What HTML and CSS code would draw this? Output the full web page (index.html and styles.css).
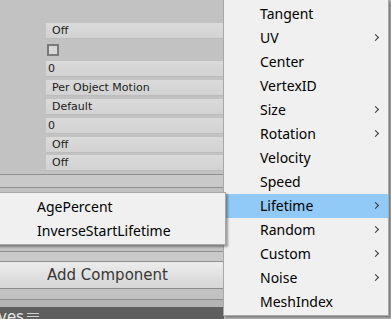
FILE: index.html
```html
<!DOCTYPE html>
<html lang="en">
<head>
    <meta charset="UTF-8">
    <title>Inspector</title>
    <link rel="stylesheet" href="styles.css">
</head>
<body>
    <div id="wrapper">
        <div class="inspector">
            <div class="field first">Off</div>
            <div class="check-row"><span class="checkbox"></span></div>
            <div class="field num">0</div>
            <div class="field">Per Object Motion</div>
            <div class="field">Default</div>
            <div class="field num">0</div>
            <div class="field">Off</div>
            <div class="field last">Off</div>
            <div class="line"></div>
            <div class="band"></div>
            <div class="line"></div>
            <div class="gap1"></div>
            <div class="line"></div>
            <div class="band2"></div>
            <div class="line"></div>
            <div class="btn-row"><div class="btn">Add Component</div></div>
            <div class="gap2"></div>
            <div class="line"></div>
            <div class="gap3"></div>
            <div class="dark-bar"><span class="dark-title">ves</span><span class="grip"></span></div>
        </div>

        <!-- context menu -->
        <div class="menu">
            <div class="item">Tangent</div>
            <div class="item sub">UV</div>
            <div class="item">Center</div>
            <div class="item">VertexID</div>
            <div class="item sub">Size</div>
            <div class="item sub">Rotation</div>
            <div class="item">Velocity</div>
            <div class="item">Speed</div>
            <div class="item sub active">Lifetime</div>
            <div class="item sub">Random</div>
            <div class="item sub">Custom</div>
            <div class="item sub">Noise</div>
            <div class="item">MeshIndex</div>
        </div>

        <div class="submenu">
            <div class="item">AgePercent</div>
            <div class="item">InverseStartLifetime</div>
        </div>
    </div>
</body>
</html>
```

FILE: styles.css
```css
body{
    margin: 0;
    background-color: #c2c2c2;
}
#wrapper{
    position: relative;
    width: 391px;
    height: 319px;
    overflow: hidden;
}
.inspector{
    width: 224px;
    display: flex;
    flex-direction: column;
    font-family: "DejaVu Sans", Verdana, sans-serif;
    font-size: 11px;
    color: #1c1c1c;
}
.field{
    height: 16px;
    line-height: 16px;
    margin-left: 46px;
    margin-top: 3px;
    padding-left: 6px;
    background: linear-gradient(#dadada, #d2d2d2);
    border-bottom: 1px solid #bcbcbc;
    box-sizing: border-box;
}
.field.num{
    padding-left: 2px;
}
.field.first{
    margin-top: 23px;
}
.field.last{
    margin-top: 2px;
    margin-bottom: 3px;
}
.check-row{
    height: 22px;
    margin-left: 46px;
    display: flex;
    align-items: center;
}
.checkbox{
    width: 8px;
    height: 8px;
    margin-left: 1px;
    border: 2px solid #7a7a7a;
    background-color: #d8d8d8;
}
.check-row + .field{
    margin-top: 0;
}
.line{
    height: 1px;
    background-color: #8f8f8f;
}
.band{
    height: 12px;
    background-color: #c9c9c9;
}
.gap1{
    height: 63px;
}
.band2{
    height: 9px;
    background-color: #c9c9c9;
}
.btn-row{
    height: 27px;
    display: flex;
}
.btn{
    width: 233px;
    margin-left: -10px;
    flex-shrink: 0;
    height: 26px;
    line-height: 26px;
    text-align: center;
    font-size: 15px;
    color: #383838;
    background: linear-gradient(#ececec, #d6d6d6);
    border: 1px solid #8a8a8a;
    border-top: none;
    border-radius: 3px;
}
.gap2{
    height: 10px;
}
.gap3{
    height: 7px;
    background-color: #b4b4b4;
}
.dark-bar{
    height: 20px;
    background-color: #5e5e5e;
    display: flex;
    align-items: flex-start;
}
.dark-title{
    color: #e6e6e6;
    font-size: 15px;
    line-height: 12px;
    margin-top: 4px;
    margin-left: -2px;
}
.grip{
    width: 12px;
    height: 2px;
    margin-left: 3px;
    margin-top: 6px;
    border-top: 1px solid #d0d0d0;
    border-bottom: 1px solid #d0d0d0;
}

/* menus */
.menu, .submenu{
    position: absolute;
    background-color: #f0f0f0;
    border: 1px solid #a8a8a8;
    font-family: "Noto Sans", "Open Sans", sans-serif;
    font-size: 14px;
    color: #000000;
    box-shadow: 2px 2px 2px rgba(0,0,0,0.35);
}
.menu{
    left: 223px;
    top: -1px;
    width: 163px;
    padding: 2px 0 1px 1px;
}
.submenu{
    left: -5px;
    top: 192px;
    width: 227px;
    padding: 2px 1px 1px 1px;
}
.item{
    position: relative;
    height: 24px;
    line-height: 24px;
    padding-left: 35px;
}
.submenu .item{
    padding-left: 40px;
}
.item.active{
    background-color: #91c9f7;
}
.item.sub::after{
    content: "";
    position: absolute;
    left: 148px;
    top: 9px;
    width: 4px;
    height: 4px;
    border-top: 1px solid #333333;
    border-right: 1px solid #333333;
    transform: rotate(45deg);
}
```
